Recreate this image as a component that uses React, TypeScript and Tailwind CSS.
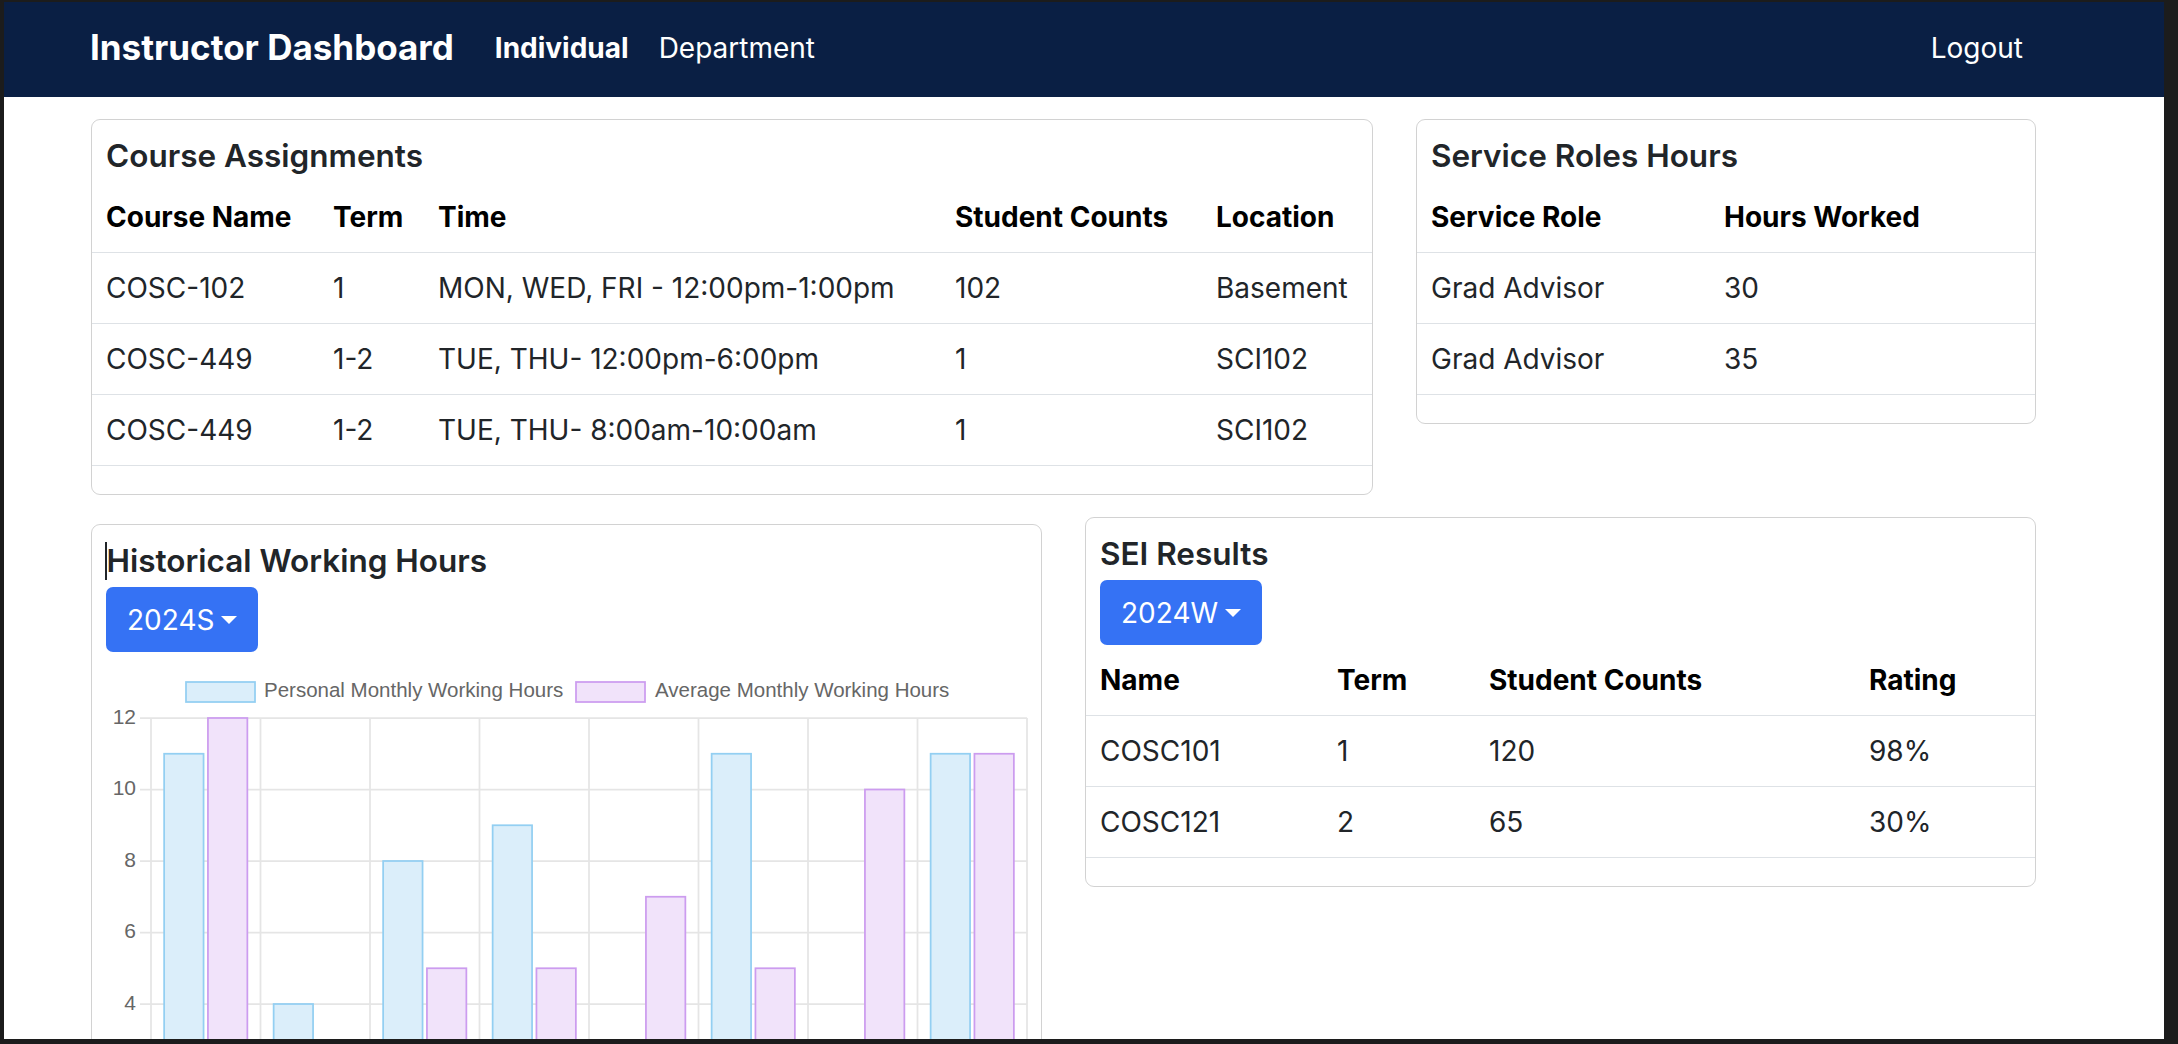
import React from 'react';

const courses = [
  { name: 'COSC-102', term: '1', time: 'MON, WED, FRI - 12:00pm-1:00pm', count: '102', location: 'Basement' },
  { name: 'COSC-449', term: '1-2', time: 'TUE, THU- 12:00pm-6:00pm', count: '1', location: 'SCI102' },
  { name: 'COSC-449', term: '1-2', time: 'TUE, THU- 8:00am-10:00am', count: '1', location: 'SCI102' },
];

const services = [
  { role: 'Grad Advisor', hours: '30' },
  { role: 'Grad Advisor', hours: '35' },
];

const sei = [
  { name: 'COSC101', term: '1', count: '120', rating: '98%' },
  { name: 'COSC121', term: '2', count: '65', rating: '30%' },
];

const personal = [11, 4, 8, 9, 0, 11, 0, 11];
const average = [12, 0, 5, 5, 7, 5, 10, 11];

const th = 'text-left font-bold text-black px-[14px] py-[14px] leading-[42px] border-b border-[#dee2e6]';
const td = 'px-[14px] py-[14px] leading-[42px] border-b border-[#dee2e6] text-[#212529] whitespace-nowrap';

function CardTitle({ children }: { children: React.ReactNode }) {
  return (
    <h5 className="px-[14px] pt-[17px] pb-[7px] text-[31.5px] leading-[38px] font-semibold text-[#212529] whitespace-nowrap">
      {children}
    </h5>
  );
}

function DropButton({ label }: { label: string }) {
  return (
    <button className="ml-[14px] flex items-center h-[65px] px-[21px] rounded-[7px] bg-[#3572f4] text-white text-[28px] leading-[42px]">
      {label}
      <span className="ml-[7px] w-0 h-0 border-x-[8px] border-x-transparent border-t-[8px] border-t-white" />
    </button>
  );
}

function HoursChart() {
  const left = 59;
  const catW = 109.5;
  const top = 66;
  const unit = 35.75;
  const zero = top + 12 * unit;
  const yOf = (v: number) => top + (12 - v) * unit;
  const slot = (catW * 0.8) / 2;
  const barW = slot * 0.9;

  return (
    <svg width="950" height="520" viewBox="0 0 950 520" className="block">
      {/* legend */}
      <rect x="94" y="30" width="69" height="20" fill="#dbeefa" stroke="#93cff2" strokeWidth="1.75" />
      <text x="172" y="40" fontSize="20.5" fill="#666" dominantBaseline="middle" fontFamily="'Liberation Sans', Arial, sans-serif">
        Personal Monthly Working Hours
      </text>
      <rect x="484" y="30" width="69" height="20" fill="#f1e3fa" stroke="#cc9cef" strokeWidth="1.75" />
      <text x="563" y="40" fontSize="20.5" fill="#666" dominantBaseline="middle" fontFamily="'Liberation Sans', Arial, sans-serif">
        Average Monthly Working Hours
      </text>

      {/* grid */}
      {Array.from({ length: 9 }).map((_, k) => (
        <line key={'v' + k} x1={left + k * catW} y1={top} x2={left + k * catW} y2={zero + 14} stroke="#e5e5e5" strokeWidth="1.75" />
      ))}
      {[12, 10, 8, 6, 4, 2, 0].map((v) => (
        <g key={'h' + v}>
          <line x1={left - 11} y1={yOf(v)} x2={left + 8 * catW} y2={yOf(v)} stroke="#e5e5e5" strokeWidth="1.75" />
          <text x="44" y={yOf(v)} fontSize="21" fill="#666" textAnchor="end" dominantBaseline="middle" fontFamily="'Liberation Sans', Arial, sans-serif">
            {v}
          </text>
        </g>
      ))}

      {/* bars */}
      {personal.map((v, i) => {
        const c = left + catW * (i + 0.5);
        return v > 0 ? (
          <rect key={'p' + i} x={c - slot + (slot - barW) / 2} y={yOf(v)} width={barW} height={zero - yOf(v)} fill="#dbeefa" stroke="#93cff2" strokeWidth="1.75" />
        ) : null;
      })}
      {average.map((v, i) => {
        const c = left + catW * (i + 0.5);
        return v > 0 ? (
          <rect key={'a' + i} x={c + (slot - barW) / 2} y={yOf(v)} width={barW} height={zero - yOf(v)} fill="#f1e3fa" stroke="#cc9cef" strokeWidth="1.75" />
        ) : null;
      })}
    </svg>
  );
}

export default function App() {
  return (
    <div className="w-screen h-screen bg-[#1c1c1c] pt-[2px] pl-[4px] pr-[14px] pb-[5px] font-['Inter','Noto_Sans',sans-serif] text-[28px]">
      <div className="w-full h-full bg-white overflow-hidden">
        {/* Navbar */}
        <header className="h-[95px] bg-[#0a1f44] flex items-center justify-between pl-[86px] pr-[141px] pb-[4px] text-white">
          <div className="flex items-center">
            <span className="text-[35px] font-bold leading-none">Instructor Dashboard</span>
            <nav className="flex items-center gap-[30px] ml-[41px]">
              <a className="font-bold cursor-pointer">Individual</a>
              <a className="cursor-pointer">Department</a>
            </nav>
          </div>
          <a className="cursor-pointer">Logout</a>
        </header>

        <div className="pl-[87px]">
          {/* Top row */}
          <div className="flex items-start gap-[43px] mt-[22px]">
            <div className="w-[1282px] border border-[rgba(0,0,0,0.175)] rounded-[9px] pb-[28px]">
              <CardTitle>Course Assignments</CardTitle>
              <table className="w-full table-fixed border-collapse">
                <colgroup>
                  <col className="w-[227px]" />
                  <col className="w-[105px]" />
                  <col className="w-[517px]" />
                  <col className="w-[261px]" />
                  <col />
                </colgroup>
                <thead>
                  <tr>
                    <th className={th}>Course Name</th>
                    <th className={th}>Term</th>
                    <th className={th}>Time</th>
                    <th className={th}>Student Counts</th>
                    <th className={th}>Location</th>
                  </tr>
                </thead>
                <tbody>
                  {courses.map((c, i) => (
                    <tr key={i}>
                      <td className={td}>{c.name}</td>
                      <td className={td}>{c.term}</td>
                      <td className={td}>{c.time}</td>
                      <td className={td}>{c.count}</td>
                      <td className={td}>{c.location}</td>
                    </tr>
                  ))}
                </tbody>
              </table>
            </div>

            <div className="w-[620px] border border-[rgba(0,0,0,0.175)] rounded-[9px] pb-[28px]">
              <CardTitle>Service Roles Hours</CardTitle>
              <table className="w-full table-fixed border-collapse">
                <colgroup>
                  <col className="w-[293px]" />
                  <col />
                </colgroup>
                <thead>
                  <tr>
                    <th className={th}>Service Role</th>
                    <th className={th}>Hours Worked</th>
                  </tr>
                </thead>
                <tbody>
                  {services.map((s, i) => (
                    <tr key={i}>
                      <td className={td}>{s.role}</td>
                      <td className={td}>{s.hours}</td>
                    </tr>
                  ))}
                </tbody>
              </table>
            </div>
          </div>

          {/* Bottom row */}
          <div className="flex items-start gap-[43px] mt-[22px]">
            <div className="w-[951px] mt-[7px] border border-[rgba(0,0,0,0.175)] rounded-[9px] pb-[28px]">
              <h5 className="px-[14px] pt-[17px] pb-[7px] text-[31.5px] leading-[38px] font-semibold text-[#212529] whitespace-nowrap">
                <span className="inline-block align-top w-[1.5px] h-[38px] bg-[#212529] -ml-[1px]" />
                Historical Working Hours
              </h5>
              <DropButton label="2024S" />
              <HoursChart />
            </div>

            <div className="w-[951px] border border-[rgba(0,0,0,0.175)] rounded-[9px] pb-[28px]">
              <CardTitle>SEI Results</CardTitle>
              <DropButton label="2024W" />
              <table className="w-full table-fixed border-collapse">
                <colgroup>
                  <col className="w-[237px]" />
                  <col className="w-[152px]" />
                  <col className="w-[380px]" />
                  <col />
                </colgroup>
                <thead>
                  <tr>
                    <th className={th}>Name</th>
                    <th className={th}>Term</th>
                    <th className={th}>Student Counts</th>
                    <th className={th}>Rating</th>
                  </tr>
                </thead>
                <tbody>
                  {sei.map((r, i) => (
                    <tr key={i}>
                      <td className={td}>{r.name}</td>
                      <td className={td}>{r.term}</td>
                      <td className={td}>{r.count}</td>
                      <td className={td}>{r.rating}</td>
                    </tr>
                  ))}
                </tbody>
              </table>
            </div>
          </div>
        </div>
      </div>
    </div>
  );
}
